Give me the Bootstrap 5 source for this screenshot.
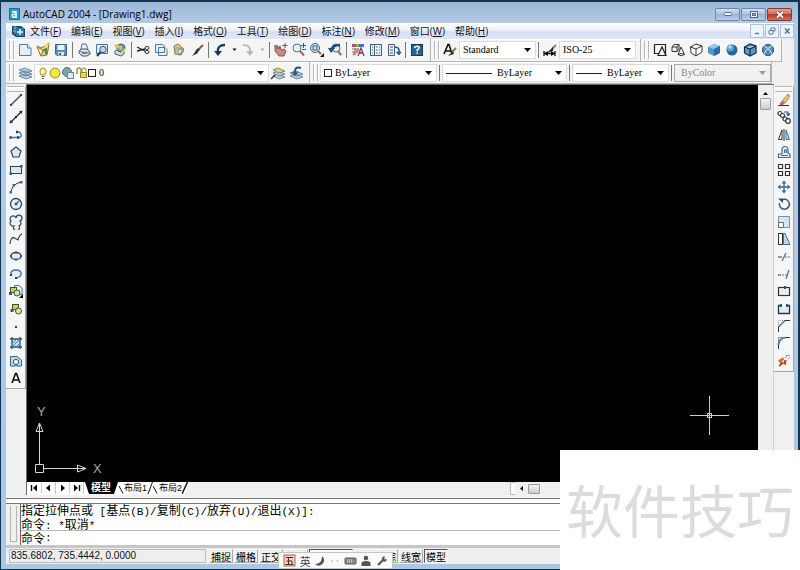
<!DOCTYPE html>
<html lang="zh-CN">
<head>
<meta charset="utf-8">
<meta name="viewport" content="width=device-width, initial-scale=1">
<title>AutoCAD 2004 - [Drawing1.dwg]</title>
<link href="https://cdn.jsdelivr.net/npm/bootstrap@5.3.0/dist/css/bootstrap.min.css" rel="stylesheet">
<style>
body{font:10px/12px "Liberation Sans","Noto Sans CJK SC",sans-serif;color:#111;background:#f0f0f0}
.frame{border:solid #12364d;border-width:2px 2px 1px 1px;background:linear-gradient(#9cb7d6,#b4cbe6 22px,#a9c7e6);padding:0 4px 5px 5px}
.face{background:#f0f0f0}
.titlebar{height:21px;padding:3px 2px 0 3px;gap:3px}
.title-text{font:10px/18px "Open Sans","Noto Sans",sans-serif;color:#000}
.wbtns{gap:1px}
.wbtn{width:25px;height:13px;border:1px solid #6d87a8;background:linear-gradient(#d0def0,#a7c0de 50%,#98b4d6 50%,#b9cfe9);border-radius:2px}
.wclose{background:linear-gradient(#e5a394,#cf6450 50%,#bb3a22 50%,#d4705a);border-color:#7b3a38}
.menubar{height:16px;padding-left:1px;background:linear-gradient(#fff,#eef1fa 45%,#d9e0f3 55%,#dfe6f6)}
.menubar a{color:#111;text-decoration:none;font:10px/15px "Open Sans","Noto Sans CJK SC",sans-serif;white-space:nowrap}
.menus{gap:10px}
.mdis{gap:1px}
.mdi{width:14px;height:14px;border:1px solid #b0c2da;background:#edf3fb}
.strip{border:solid #b4b4b4;border-width:0 1px 1px 0;background:#f5f5f5;box-shadow:inset 0 1px #fff;padding:0 4px 0 2px}
.strip.tail{padding-right:0}
.row1{height:23px}
.row2{height:22px}
.grip{width:8px;padding:2px 1px}
.grip::before{content:"";display:block;height:100%;border:solid #b5b5b5;border-width:0 1px;width:5px;box-shadow:inset 1px 0 #fff,1px 0 #fff}
.tool{width:18px;height:18px}
.tool svg,.palette svg{display:block;width:16px;height:16px;margin:auto}
.drop{width:10px;height:18px}
.bar{width:1px;height:16px;background:#777;margin:0 2px}
.combo{height:18px;background:#fff;border:1px solid #dcdcdc;padding:0 4px 0 2px;gap:1px;min-width:0}
.combo select{appearance:none;border:0;background:none;flex:1 1 0;min-width:0;padding:0 1px;font:10px/14px "Liberation Serif",serif;color:#000;opacity:1;outline-offset:-1px}
.combo .tri{width:7px;height:4px;flex:none}
.combo.off{background:#f1f1f1;border-color:#aaa}
.combo.off select{color:#8a8a8a}
.w-text{width:77px}.w-layer{width:235px}.w-color{width:117px}.w-line{width:125px}.w-weight{width:97px}
.palette{width:20px;background:#f6f6f6;border:solid #a5a5a5;border-width:0 1px 1px 0;flex:none;padding-bottom:2px}
.hgrip{height:6px;margin:2px 1px 0;border:solid #b5b5b5;border-width:1px 0;box-shadow:inset 0 1px #fff}
.tools-left{height:294px}.tools-right{height:277px}
.palette button{height:16px}
.well{border:solid #6a6a6a;border-width:1px 0 0 1px}
.model{background:#000;cursor:crosshair}
.ucs{position:absolute;left:6px;bottom:1px;width:72px;height:76px}
.cross{position:absolute;right:28px;bottom:46px;width:41px;height:41px}
.vscroll{width:16px;background:#efefef;border-right:1px solid #d0d0d0}
.thumb{border:1px solid #9a9a9a;background:linear-gradient(#f4f4f4,#cdcdcd);border-radius:1px}
.vthumb{width:11px;height:12px}
.hthumb{width:12px;height:10px}
.tabs{height:13px}
.tabnav{background:#fff;padding-left:1px}
.tabnav button{width:14px;height:12px;border-right:1px solid #ccc!important}
.sheets{background:#fff;clip-path:polygon(0 0,100% 0,calc(100% - 5px) 100%,0 100%)}
.sheet{font:9px/12px "Liberation Sans","Noto Sans CJK SC",sans-serif;height:12px;color:#000}
.sheet.active{background:#000;color:#fff;font-size:10px;font-weight:700}
.slash{width:7px;height:12px;flex:none}
.slash.narrow{width:6px}
.hscroll{gap:4px;width:264px}
.notch{width:5px;background:#fff;border:1px solid #bbb;border-right:0}
.splitter{height:9px;background:linear-gradient(#f2f2f2 3px,#777 3px,#777 4px,#fff 4px,#fff 8px,#777 8px)}
.cmd{height:41px}
.cmdgrip{width:7px;margin:2px 3px 3px 4px;border:solid #b5b5b5;border-width:0 1px 1px;flex:none}
.cmdbox{background:#fff;border-left:1px solid #666}
.cmdtext{font:12px/12px "Noto Sans CJK SC",sans-serif;white-space:pre;color:#000}
.cmdtext span{font:11px/12px "Liberation Mono",monospace}
.history{height:27px;border-bottom:1px solid #bbb}
.prompt{height:13px}
.status{height:19px;background:#efeded;border-top:3px solid #c6c6c6}
.coords{width:197px;height:14px;border:1px solid #bbb;line-height:12px;padding-left:1px;margin-left:3px;white-space:pre}
.mode{font:10px/13px "Noto Sans CJK SC",sans-serif;color:#000;height:14px;border:1px solid #f5f5f5;border-right-color:#aaa;border-bottom-color:#aaa;padding:0 1px;white-space:nowrap}
.mode.on{border-color:#555 #eee #eee #555;background:#f8f8f8}
.modes{gap:1px;margin-left:3px}
.ime{position:absolute;left:277px;bottom:0;width:115px;height:17px;background:#fafafa;border:1px solid #c5c5c5;padding:0 4px;font:11px/14px "Noto Sans CJK SC",sans-serif;color:#444}
.stamp{position:absolute;right:0;bottom:0;width:240px;height:120px;background:#fff;color:#dcdcdc;font:57px/116px "Noto Sans CJK SC",sans-serif;text-align:center}
</style>
<script src="https://cdn.jsdelivr.net/npm/bootstrap@5.3.0/dist/js/bootstrap.bundle.min.js"></script>
</head>
<body>
<div class="frame vh-100 d-flex flex-column position-relative overflow-hidden">
<header class="titlebar d-flex align-items-center flex-shrink-0">
  <svg width="11" height="12" viewBox="0 0 11 12" class="flex-shrink-0"><rect width="11" height="12" fill="#0e7396"/><rect x="1" y="1" width="9" height="10" fill="#2a9cbd"/><path d="M3 4.4Q5 3 7 4v6M7 6.3Q3 6 3.2 8T7 8.700" fill="none" stroke="#fff" stroke-width="1.600"/></svg>
  <span class="title-text flex-grow-1">AutoCAD 2004 - [Drawing1.dwg]</span>
  <div class="wbtns d-flex">
  <button class="wbtn p-0 d-flex align-items-center justify-content-center" aria-label="最小化"><svg width="10" height="6"><rect x="1.500" y="1.500" width="7" height="3" rx="1" fill="#fff" stroke="#526780"/></svg></button>
  <button class="wbtn p-0 d-flex align-items-center justify-content-center" aria-label="还原"><svg width="10" height="9"><rect x="1.500" y="1.500" width="7" height="6" fill="#fff" stroke="#526780"/><rect x="3.500" y="3.500" width="3" height="2" fill="#9db6d4" stroke="#526780"/></svg></button>
  <button class="wbtn wclose p-0 d-flex align-items-center justify-content-center" aria-label="关闭"><svg width="10" height="9"><path d="M2 2L8 7.500M8 2L2 7.500" stroke="#6a3430" stroke-width="3"/><path d="M2 2L8 7.500M8 2L2 7.500" stroke="#fff" stroke-width="1.800"/></svg></button>
  </div>
</header>
<nav class="menubar d-flex align-items-center flex-shrink-0">
  <svg width="15" height="14" viewBox="0 0 15 14" class="ms-1 me-1 flex-shrink-0"><path d="M1 2H10L14 5V13H5L1 10Z" fill="#174b68"/><path d="M2 4H7M2 7H7M4 2V10" stroke="#7db7d5"/><rect x="5" y="4" width="8" height="8" fill="#2679a3"/><path d="M9 5V11M6 8H12" stroke="#e5f6ff" stroke-width="1.500"/></svg>
  <div class="menus d-flex flex-grow-1">
  <a href="#">文件(<u>F</u>)</a><a href="#">编辑(<u>E</u>)</a><a href="#">视图(<u>V</u>)</a><a href="#">插入(<u>I</u>)</a><a href="#">格式(<u>O</u>)</a><a href="#">工具(<u>T</u>)</a><a href="#">绘图(<u>D</u>)</a><a href="#">标注(<u>N</u>)</a><a href="#">修改(<u>M</u>)</a><a href="#">窗口(<u>W</u>)</a><a href="#">帮助(<u>H</u>)</a>
  </div>
  <div class="mdis d-flex">
  <button class="mdi p-0 d-flex" aria-label="最小化文档"><svg width="12" height="12"><path d="M4 8.500H8" stroke="#587ca0" stroke-width="1.500"/></svg></button>
  <button class="mdi p-0 d-flex" aria-label="还原文档"><svg width="12" height="12"><path d="M5 5V3H9V6H7M3 5.500H7V9H3Z" fill="none" stroke="#587ca0"/></svg></button>
  <button class="mdi p-0 d-flex" aria-label="关闭文档"><svg width="12" height="12"><path d="M4 3.500L8.500 8.500M8.500 3.500L4 8.500" stroke="#587ca0" stroke-width="1.600"/></svg></button>
  </div>
</nav>
<div class="face d-flex flex-column flex-shrink-0" role="toolbar" aria-label="工具栏">
<div class="d-flex">
<div class="strip row1 d-flex align-items-center">
  <div class="grip h-100"></div>
  <button class="tool btn p-0 border-0" aria-label="新建"><svg viewBox="0 0 16 16"><path d="M2.500 2.500H10.500L14 6V13.500H2.500Z" fill="#e3f0fb" stroke="#587c98"/><path d="M10.500 2.500V6H14" fill="#fff" stroke="#587c98"/></svg></button>
  <button class="tool btn p-0 border-0" aria-label="打开"><svg viewBox="0 0 16 16"><path d="M2 4L6 6L10 4L14 1L13 8L12 13L6 14Z" fill="#e7cf6e" stroke="#87713f"/><path d="M2 5L6 14L8 8Z" fill="#fff0ac" stroke="#987c32"/><path d="M9 4L14 1L12 7Z" fill="#f6e64a"/><path d="M8 9L11 7V12" fill="none" stroke="#376a60" stroke-width="1.500"/></svg></button>
  <button class="tool btn p-0 border-0" aria-label="保存"><svg viewBox="0 0 16 16"><path d="M2.500 2.500H13.500V13.500H4L2.500 12Z" fill="#5c8bb8" stroke="#3b658e"/><rect x="4.500" y="3" width="7" height="5" fill="#e7f1fb"/><rect x="5" y="10" width="6" height="3.500" fill="#dce8f0"/><rect x="6" y="11" width="2" height="2" fill="#345d82"/></svg></button>
  <span class="bar"></span>
  <button class="tool btn p-0 border-0" aria-label="打印"><svg viewBox="0 0 16 16"><path d="M5 7L6 2H10L12 7" fill="#e8f3fc" stroke="#586d82"/><path d="M3 9L5 7H11L14 10V12L11 14H6L3 11Z" fill="#d8dfe8" stroke="#485566"/><path d="M4 9L8 11H13M6 12L11 10" fill="none" stroke="#53677c"/></svg></button>
  <button class="tool btn p-0 border-0" aria-label="打印预览"><svg viewBox="0 0 16 16"><path d="M2.500 2.500H13.500V11.500H2.500Z" fill="#dcecf8" stroke="#4e7290"/><circle cx="9" cy="7.500" r="3.200" fill="#b6d7ef" stroke="#37597a"/><path d="M6.500 10L3 14" stroke="#27384a" stroke-width="2"/></svg></button>
  <button class="tool btn p-0 border-0" aria-label="发布"><svg viewBox="0 0 16 16"><path d="M3 9L6 7L12 9V12L9 14L3 12Z" fill="#d3dce4" stroke="#4c5f72"/><circle cx="9" cy="6" r="4" fill="#5ca3d0" stroke="#315f85"/><path d="M6 5Q8 2 10 5L9 8ZM9 10L13 6V10Z" fill="#e8cd42"/><path d="M3 3H8L5 8Z" fill="#f2d74f" stroke="#a78934" stroke-width=".6"/></svg></button>
  <span class="bar"></span>
  <button class="tool btn p-0 border-0" aria-label="剪切"><svg viewBox="0 0 16 16" fill="none"><path d="M2 5L10 9M2 9L10 7" stroke="#222" stroke-width="1.300"/><ellipse cx="12" cy="6" rx="2" ry="1.500" stroke="#333"/><ellipse cx="12" cy="10" rx="2" ry="1.500" stroke="#333"/></svg></button>
  <button class="tool btn p-0 border-0" aria-label="复制"><svg viewBox="0 0 16 16" fill="#e6f2fb" stroke="#547994"><path d="M2.500 2.500H9.500L11.500 4V10.500H2.500ZM5.500 5.500H12L14 7.500V13.500H5.500Z"/></svg></button>
  <button class="tool btn p-0 border-0" aria-label="粘贴"><svg viewBox="0 0 16 16"><path d="M3 4L7 2L13 7L10 13L4 12Z" fill="#dfc981" stroke="#907a45"/><path d="M5 6H9L13 9L9 13L5 12Z" fill="#fff2bd" stroke="#a89055"/><path d="M7 7H11V10L9 12H7Z" fill="#dcebf4" stroke="#587b95"/></svg></button>
  <button class="tool btn p-0 border-0" aria-label="特性匹配"><svg viewBox="0 0 16 16"><path d="M14 3L9 8" stroke="#965727" stroke-width="2"/><path d="M10 7L7 10" stroke="#333" stroke-width="2.500"/><path d="M7 9L3 14L9 11Z" fill="#222"/></svg></button>
  <span class="bar"></span>
  <button class="tool btn p-0 border-0" aria-label="放弃"><svg viewBox="0 0 16 16"><path d="M13 3Q5 3 6 10" fill="none" stroke="#173a63" stroke-width="2.300"/><path d="M2 9H10L6 14Z" fill="#173a63"/></svg></button>
  <button class="drop btn p-0 border-0 d-flex align-items-center" aria-label="放弃列表"><svg width="7" height="4" viewBox="0 0 7 4" class="m-auto"><path d="M1.500 .5H5.500L3.500 3Z" fill="#111"/></svg></button>
  <button class="tool btn p-0 border-0" aria-label="重做"><svg viewBox="0 0 16 16"><path d="M3 3Q11 3 10 10" fill="none" stroke="#bbb" stroke-width="2"/><path d="M6 9H14L10 14Z" fill="#bbb"/></svg></button>
  <button class="drop btn p-0 border-0 d-flex align-items-center" aria-label="重做列表"><svg width="7" height="4" viewBox="0 0 7 4" class="m-auto"><path d="M1.500 .5H5.500L3.500 3Z" fill="#aaa"/></svg></button>
  <span class="bar"></span>
  <button class="tool btn p-0 border-0" aria-label="平移"><svg viewBox="0 0 16 16"><path d="M2 3L4 7V3L6 7L7 4L8 8L11 7L13 9L11 14H6L2 9Z" fill="#c88880" stroke="#855752"/><path d="M12 1V6M9.500 3.500H14.500" stroke="#2f6596"/></svg></button>
  <button class="tool btn p-0 border-0" aria-label="实时缩放"><svg viewBox="0 0 16 16"><circle cx="6" cy="6" r="4" fill="#e1f0fa" stroke="#517291"/><path d="M9 9L13 13.500" stroke="#b06852" stroke-width="2.200"/><path d="M12.500 1V6M10 3.500H15M11 7.500H15" stroke="#315f8e"/></svg></button>
  <button class="tool btn p-0 border-0" aria-label="窗口缩放"><svg viewBox="0 0 16 16"><circle cx="6" cy="6" r="4.500" fill="#d1e7f7" stroke="#3b678e"/><rect x="4" y="4" width="4" height="4" fill="none" stroke="#3b678e"/><path d="M9 9L12 12" stroke="#b06852" stroke-width="2.200"/><path d="M15 11V15H11Z" fill="#111"/></svg></button>
  <button class="tool btn p-0 border-0" aria-label="缩放上一个"><svg viewBox="0 0 16 16"><circle cx="9" cy="6" r="4" fill="#dfeefa" stroke="#3b678e"/><path d="M11 9L14 13" stroke="#b06852" stroke-width="2.200"/><path d="M4 9Q5 3 13 3" fill="none" stroke="#204c7b" stroke-width="2.500"/><path d="M1 6H8L4 11Z" fill="#204c7b"/></svg></button>
  <span class="bar"></span>
  <button class="tool btn p-0 border-0" aria-label="特性"><svg viewBox="0 0 16 16"><rect x="2" y="2" width="4" height="3" fill="#c54370"/><rect x="6" y="2" width="3" height="3" fill="#7ab84a"/><rect x="9" y="2" width="5" height="3" fill="#4e6fc1"/><path d="M2 7H9M2 10H8M5 6V13" stroke="#667a8f"/><path d="M8 14L11 6L14 14M9 11H13" fill="none" stroke="#703e76" stroke-width="1.300"/><path d="M3 13L9 7" stroke="#de7654" stroke-width="2"/></svg></button>
  <button class="tool btn p-0 border-0" aria-label="设计中心"><svg viewBox="0 0 16 16" fill="#e7f3fb" stroke="#41627d"><rect x="2.500" y="2.500" width="11" height="11"/><path d="M6.500 2.500V13.500M8 5H9.500M11 5H12M8 8H9.500M11 8H12M8 11H9.500M11 11H12M4 5H5M4 8H5M4 11H5"/></svg></button>
  <button class="tool btn p-0 border-0" aria-label="工具选项板"><svg viewBox="0 0 16 16" fill="#e7f3fb" stroke="#41627d"><path d="M2.500 2.500H8.500V13.500H2.500ZM4 5H7M4 8H7M4 11H7"/><path d="M9 5Q14 5 13 11" fill="none" stroke="#245183" stroke-width="1.500"/><path d="M10.500 10H15L13 13Z" fill="#245183"/></svg></button>
  <span class="bar"></span>
  <button class="tool btn p-0 border-0" aria-label="帮助"><svg viewBox="0 0 16 16"><rect x="2.500" y="2.500" width="11" height="11" fill="#276491" stroke="#143b62"/><path d="M5.500 6Q6 4 8.500 4.200Q12 5.500 8.200 8V9.500M8.200 10.500V12" fill="none" stroke="#fff" stroke-width="1.500"/></svg></button>
</div>
<div class="strip row1 d-flex align-items-center">
  <div class="grip h-100"></div>
  <button class="tool btn p-0 border-0" aria-label="文字样式"><svg viewBox="0 0 16 16"><path d="M2 12L6 2.500H7L10 12M4 9H9" fill="none" stroke="#111" stroke-width="1.600"/><path d="M14 6L10 10" stroke="#9b7644" stroke-width="2"/><path d="M11 9L6 14L12 12Z" fill="#333"/></svg></button>
  <div class="combo w-text d-flex align-items-center"><select aria-label="文字样式名"><option>Standard</option></select><svg class="tri" viewBox="0 0 7 4"><path d="M0 0H7L3.500 4Z"/></svg></div>
  <span class="bar"></span>
  <button class="tool btn p-0 border-0" aria-label="标注样式"><svg viewBox="0 0 16 16"><path d="M2 9V14M13 9V14M2 11.500H13" stroke="#111" stroke-width="1.300"/><path d="M2 11.500L6 9V14ZM13 11.500L9 9V14Z"/><path d="M14 3L10 7" stroke="#a67b3e" stroke-width="2"/><path d="M11 5L5 11L11 9Z" fill="#222"/></svg></button>
  <div class="combo w-text d-flex align-items-center"><select aria-label="标注样式名"><option>ISO-25</option></select><svg class="tri" viewBox="0 0 7 4"><path d="M0 0H7L3.500 4Z"/></svg></div>
</div>
<div class="strip row1 d-flex align-items-center">
  <div class="grip h-100"></div>
  <button class="tool btn p-0 border-0" aria-label="二维线框"><svg viewBox="0 0 16 16" fill="none" stroke="#222" stroke-width="1.200"><path d="M2.500 2.500H13.500V13M2.500 2.500V11.500H7"/><path d="M6 13.500L10 5L14 13.500Z"/></svg></button>
  <button class="tool btn p-0 border-0" aria-label="三维线框"><svg viewBox="0 0 16 16" fill="none" stroke="#333"><path d="M2 5L4 2.500H9V7L7 9.500H2ZM2 5H7V9.500M7 5L9 2.500M11 5L8 12.500Q11 15 14.500 12.500ZM8 12.500Q11 10.500 14.500 12.500"/></svg></button>
  <button class="tool btn p-0 border-0" aria-label="消隐"><svg viewBox="0 0 16 16" fill="#fff" stroke="#333"><path d="M2.500 5L8 2L14 4V10L8 14L3 11ZM2.500 5L8 7L14 4M8 7V14"/></svg></button>
  <button class="tool btn p-0 border-0" aria-label="平面着色"><svg viewBox="0 0 16 16"><path d="M2 5L8 2L14 4V11L8 14L2 11Z" fill="#4a96d0"/><path d="M2 5L8 2L14 4L8 7Z" fill="#8fc8ef"/><path d="M8 7V14L14 11V4Z" fill="#2c6ca5"/></svg></button>
  <button class="tool btn p-0 border-0" aria-label="体着色"><svg viewBox="0 0 16 16"><circle cx="8" cy="8" r="5.500" fill="#28669a"/><circle cx="6.500" cy="6" r="3.500" fill="#5ca4d5"/><circle cx="6" cy="5" r="1.500" fill="#c3e6fa"/></svg></button>
  <button class="tool btn p-0 border-0" aria-label="带边框平面着色"><svg viewBox="0 0 16 16" fill="#5b9aca" stroke="#132c45" stroke-width="1.200"><path d="M2.500 5L8 2L14 4V11L8 14L2.500 11Z"/><path d="M2.500 5L8 7L14 4M8 7V14" fill="#a2d2ef"/></svg></button>
  <button class="tool btn p-0 border-0" aria-label="带边框体着色"><svg viewBox="0 0 16 16"><circle cx="8" cy="8" r="5.500" fill="#4d8fc0" stroke="#23496b"/><path d="M4 4Q10 6 12 12M12 4Q6 6 4 12" fill="none" stroke="#d4edfb"/></svg></button>
</div>
</div>
<div class="d-flex">
<div class="strip row2 d-flex align-items-center">
  <div class="grip h-100"></div>
  <button class="tool btn p-0 border-0" aria-label="图层特性管理器"><svg viewBox="0 0 16 16" fill="#b8cee2" stroke="#577590" stroke-width=".8"><path d="M2 11L8 9L15 12L9 14ZM2 8L8 6L15 9L9 11ZM2 5L8 3L15 6L9 8Z"/></svg></button>
  <div class="combo w-layer d-flex align-items-center">
  <svg width="60" height="14" viewBox="0 0 60 14" class="flex-shrink-0"><path d="M4 9Q1 3 6 2Q11 3 8 9Z" fill="#fff49b" stroke="#9b8a37"/><path d="M4.500 10.500H7.500M5 12.500H7" stroke="#567"/><circle cx="18" cy="7" r="5" fill="#f1e73e" stroke="#939040"/><circle cx="30" cy="6" r="4.500" fill="#79a6ac" stroke="#536f78"/><rect x="30.500" y="6.500" width="6" height="6" fill="#d9e8ee" stroke="#6f8792"/><path d="M40 8V4Q40 2 42 2T44 4V7" fill="none" stroke="#948b2e" stroke-width="1.300"/><rect x="43.500" y="6.500" width="6" height="5" fill="#e8db43" stroke="#948b2e"/><path d="M45 6V3Q47 1 49 3V6" fill="none" stroke="#948b2e"/><rect x="51.500" y="3.500" width="7" height="7" fill="#fff" stroke="#222"/></svg>
  <select aria-label="图层"><option>0</option></select><svg class="tri" viewBox="0 0 7 4"><path d="M0 0H7L3.500 4Z"/></svg></div>
  <button class="tool btn p-0 border-0" aria-label="将对象的图层置为当前"><svg viewBox="0 0 16 16" stroke="#617580" stroke-width=".8"><path d="M3 11L8 9L15 12L9 14Z" fill="#b8cee2"/><path d="M3 8L8 6L15 9L9 11Z" fill="#b8cee2"/><path d="M3 5L8 3L15 6L9 8Z" fill="#e3d85b"/><path d="M1 14L5 10" stroke="#222" stroke-width="1.300"/></svg></button>
  <button class="tool btn p-0 border-0" aria-label="上一个图层"><svg viewBox="0 0 16 16" stroke="#577590" stroke-width=".8"><path d="M2 11L8 9L15 12L9 14ZM2 8L8 6L15 9L9 11Z" fill="#b8cee2"/><path d="M13 3Q6 1 7 8" fill="none" stroke="#24527f" stroke-width="2"/><path d="M4 7H10L7 11Z" fill="#24527f"/></svg></button>
</div>
<div class="strip tail row2 d-flex align-items-center">
  <div class="grip h-100"></div>
  <div class="combo w-color d-flex align-items-center"><svg width="10" height="12" class="flex-shrink-0"><rect x="1.500" y="2.500" width="7" height="7" fill="#fff" stroke="#222"/></svg><select aria-label="颜色"><option>ByLayer</option></select><svg class="tri" viewBox="0 0 7 4"><path d="M0 0H7L3.500 4Z"/></svg></div>
  <span class="bar"></span>
  <div class="combo w-line d-flex align-items-center"><svg width="47" height="12" class="flex-shrink-0"><path d="M1 6.500H47" stroke="#222"/></svg><select aria-label="线型" class="ps-1"><option>ByLayer</option></select><svg class="tri" viewBox="0 0 7 4"><path d="M0 0H7L3.500 4Z"/></svg></div>
  <span class="bar"></span>
  <div class="combo w-weight d-flex align-items-center"><svg width="27" height="12" class="flex-shrink-0"><path d="M1 6.500H27" stroke="#222"/></svg><select aria-label="线宽" class="ps-1"><option>ByLayer</option></select><svg class="tri" viewBox="0 0 7 4"><path d="M0 0H7L3.500 4Z"/></svg></div>
  <span class="bar"></span>
  <div class="combo off w-weight d-flex align-items-center"><select aria-label="打印样式" class="ps-1" disabled><option>ByColor</option></select><svg class="tri" viewBox="0 0 7 4"><path d="M0 0H7L3.500 4Z" fill="#999"/></svg></div>
</div>
</div>
</div>
<main class="face d-flex flex-grow-1 overflow-hidden">
<aside class="h-100 flex-shrink-0"><div class="palette">
  <div class="hgrip"></div>
  <div class="tools-left d-flex flex-column justify-content-between">
  <button class="btn p-0 border-0" aria-label="直线"><svg viewBox="0 0 16 16"><path d="M3 13L13 3" stroke="#30577c" stroke-width="1.400"/><path d="M2 12H4V14H2ZM12 2H14V4H12Z" fill="#1d4870"/></svg></button>
  <button class="btn p-0 border-0" aria-label="构造线"><svg viewBox="0 0 16 16"><path d="M3 13L13 3" stroke="#222" stroke-width="1.200"/><path d="M1.500 14.500L2.500 11L5 13.500ZM14.500 1.500L13.500 5L11 2.500ZM7 7H9V9H7Z" fill="#182a3c"/></svg></button>
  <button class="btn p-0 border-0" aria-label="多段线"><svg viewBox="0 0 16 16" fill="none" stroke="#3c75a8" stroke-width="1.300"><path d="M2 10.500H11Q14 10 13 7T8 5"/><path d="M1.500 10.500H3.500M9 10.500H11M8 5H10" stroke="#183d60" stroke-width="2.400"/></svg></button>
  <button class="btn p-0 border-0" aria-label="正多边形"><svg viewBox="0 0 16 16"><path d="M8 3L13 7L11 13H5L3 7Z" fill="#d9e8f4" stroke="#30465b" stroke-width="1.200"/></svg></button>
  <button class="btn p-0 border-0" aria-label="矩形"><svg viewBox="0 0 16 16"><rect x="2.500" y="4.500" width="11" height="7" fill="#d9e8f4" stroke="#30465b"/><path d="M1.500 10.500H4V13H1.500ZM12 3H14.500V5.500H12Z" fill="#285d8d"/></svg></button>
  <button class="btn p-0 border-0" aria-label="圆弧"><svg viewBox="0 0 16 16"><path d="M3 13Q4 5 13 3" fill="none" stroke="#333"/><path d="M1.500 12H4V14.500H1.500ZM4.500 5H7V7.500H4.500ZM12 2H14.500V4.500H12Z" fill="#356a9d"/></svg></button>
  <button class="btn p-0 border-0" aria-label="圆"><svg viewBox="0 0 16 16"><circle cx="8" cy="8" r="5.500" fill="#e8f2fa" stroke="#29435c" stroke-width="1.300"/><path d="M8 8L12 4" stroke="#3777b0" stroke-width="1.500"/><circle cx="8" cy="8" r="1.500" fill="#285d8d"/></svg></button>
  <button class="btn p-0 border-0" aria-label="修订云线"><svg viewBox="0 0 16 16"><path d="M8 4A3 3 0 1 0 3 7A3 3 0 0 0 6 12A3 3 0 1 0 11 12A3 3 0 0 0 12 7A3 3 0 1 0 8 4Z" fill="#e9f1f8" stroke="#35495e" stroke-width="1.200"/></svg></button>
  <button class="btn p-0 border-0" aria-label="样条曲线"><svg viewBox="0 0 16 16"><path d="M2 13Q3 5 6.500 7T10 9Q11 4 14 3" fill="none" stroke="#333" stroke-width="1.100"/></svg></button>
  <button class="btn p-0 border-0" aria-label="椭圆"><svg viewBox="0 0 16 16"><ellipse cx="8" cy="8" rx="5" ry="3.500" fill="#e2eff9" stroke="#29435c" stroke-width="1.300"/><path d="M7 3.500H9V5.500H7ZM2 7H4V9H2ZM12 7H14V9H12ZM7 10.500H9V12.500H7Z" fill="#285d8d"/></svg></button>
  <button class="btn p-0 border-0" aria-label="椭圆弧"><svg viewBox="0 0 16 16"><path d="M3 9Q2 4 8 4T13 9Q11 12 8 12" fill="#e2eff9" stroke="#3c70a1" stroke-width="1.300"/><path d="M2 8H4V10H2ZM7 11H9V13H7Z" fill="#183d60"/></svg></button>
  <button class="btn p-0 border-0" aria-label="插入块"><svg viewBox="0 0 16 16"><path d="M6.500 2.500H11L14 5V11.500H6.500Z" fill="#e4f1fa" stroke="#547994"/><rect x="2.500" y="4.500" width="6" height="5" fill="#c6ce65" stroke="#36592c"/><circle cx="9" cy="10" r="3" fill="#d9e4a5" stroke="#36592c"/><rect x="1" y="9" width="3" height="3" fill="#285d8d"/><path d="M15 11V15H11Z"/></svg></button>
  <button class="btn p-0 border-0" aria-label="创建块"><svg viewBox="0 0 16 16"><rect x="4.500" y="3.500" width="6" height="5" fill="#c6ce65" stroke="#36592c"/><circle cx="10.500" cy="10" r="3" fill="#d9e4a5" stroke="#36592c"/><rect x="2.500" y="8" width="3" height="3" fill="#285d8d"/></svg></button>
  <button class="btn p-0 border-0" aria-label="点"><svg viewBox="0 0 16 16"><rect x="7" y="8" width="2" height="2" fill="#204a73"/></svg></button>
  <button class="btn p-0 border-0" aria-label="图案填充"><svg viewBox="0 0 16 16"><rect x="4" y="4" width="8" height="8" fill="#c8dff1"/><path d="M4 2V14M12 2V14M2 4H14M2 12H14" stroke="#264f76" stroke-width="1.300"/><path d="M4 9L9 4M4 12L12 4M8 12L12 8" stroke="#4d84b4"/></svg></button>
  <button class="btn p-0 border-0" aria-label="面域"><svg viewBox="0 0 16 16"><path d="M2.500 3.500H9L13.500 7V13H2.500Z" fill="#bdd9ed" stroke="#3d6589"/><circle cx="8" cy="9" r="2.700" fill="#fff" stroke="#3d6589"/></svg></button>
  <button class="btn p-0 border-0" aria-label="多行文字"><svg viewBox="0 0 16 16"><path d="M4 13L7.500 3.500H8.500L12 13M5.500 10H10.500" fill="none" stroke="#111" stroke-width="1.600"/></svg></button>
  </div>
</div></aside>
<section class="well d-flex flex-column flex-grow-1 overflow-hidden">
  <div class="d-flex flex-grow-1">
  <div class="model position-relative flex-grow-1">
    <svg class="ucs" viewBox="0 0 72 76"><g fill="none" stroke="#d5d5d5"><path d="M2.500 59.500H10.500V67.500H2.500ZM6.500 59V18M11 63.500H53M3 26.500H10L6.500 18ZM44.500 60V67L53 63.500Z"/></g><text x="4" y="11" font-family="Liberation Sans,sans-serif" font-size="13" fill="#aaa">Y</text><text x="60" y="68" font-family="Liberation Sans,sans-serif" font-size="13" fill="#aaa">X</text></svg>
    <svg class="cross" viewBox="0 0 41 41"><path d="M1 20.500H40M20.500 1V40" stroke="#ccc"/><rect x="18.500" y="18.500" width="4" height="4" fill="none" stroke="#ccc"/></svg>
  </div>
  <div class="vscroll d-flex flex-column align-items-center flex-shrink-0 pt-1"><svg width="7" height="9"><path d="M1 6H6L3.500 3Z"/></svg><span class="thumb vthumb"></span></div>
  </div>
  <div class="tabs face d-flex flex-shrink-0">
    <div class="tabnav d-flex">
    <button class="btn p-0 border-0 rounded-0 d-flex" aria-label="第一个"><svg width="12" height="12"><path d="M3.500 3V9" stroke="#000" stroke-width="1.400"/><path d="M9 2.500V9.500L5 6Z"/></svg></button>
    <button class="btn p-0 border-0 rounded-0 d-flex" aria-label="上一个"><svg width="12" height="12"><path d="M8 2.500V9.500L4 6Z"/></svg></button>
    <button class="btn p-0 border-0 rounded-0 d-flex" aria-label="下一个"><svg width="12" height="12"><path d="M5 2.500V9.500L9 6Z"/></svg></button>
    <button class="btn p-0 border-0 rounded-0 d-flex" aria-label="最后一个"><svg width="12" height="12"><path d="M9.500 3V9" stroke="#000" stroke-width="1.400"/><path d="M4 2.500V9.500L8 6Z"/></svg></button>
    </div>
    <div class="sheets d-flex">
    <svg class="slash" viewBox="0 0 7 12"><path d="M1 0H7V12H5Z"/></svg><button class="sheet active btn p-0 border-0 rounded-0">模型</button><svg class="slash" viewBox="0 0 7 12"><path d="M0 0H7L3 12H0Z"/></svg>
    <svg class="slash narrow" viewBox="0 0 6 12"><path d="M1 4L5 11.500" stroke="#111"/></svg><button class="sheet btn p-0 border-0 rounded-0">布局1</button><svg class="slash narrow" viewBox="0 0 6 12"><path d="M5.500 0L1 12" stroke="#111"/></svg>
    <svg class="slash narrow" viewBox="0 0 6 12"><path d="M0 4L4 11.500" stroke="#111"/></svg><button class="sheet btn p-0 border-0 rounded-0">布局2</button><svg class="slash" viewBox="0 0 7 12"><path d="M5.500 0L0 12" stroke="#111" stroke-width="1.500"/></svg>
    </div>
    <div class="hscroll d-flex align-items-center ms-auto"><span class="notch h-100"></span><svg width="5" height="7"><path d="M4 1V6L1 3.500Z"/></svg><span class="thumb hthumb"></span></div>
  </div>
</section>
<aside class="h-100 flex-shrink-0"><div class="palette">
  <div class="hgrip"></div>
  <div class="tools-right d-flex flex-column justify-content-between">
  <button class="btn p-0 border-0" aria-label="删除"><svg viewBox="0 0 16 16"><path d="M2 13.500H13" stroke="#333"/><path d="M4 11L6 9L9 11L7 13H4Z" fill="#c66b64"/><path d="M6 9L12 2L14 4L9 11Z" fill="#e3c873" stroke="#80632e" stroke-width=".7"/></svg></button>
  <button class="btn p-0 border-0" aria-label="复制对象"><svg viewBox="0 0 16 16" fill="#fff" stroke="#333" stroke-width="1.200"><circle cx="4" cy="4.500" r="2"/><circle cx="6.500" cy="6.500" r="2"/><circle cx="9" cy="10" r="2"/><circle cx="12" cy="12" r="2.300"/><path d="M8 3H12V6M10.500 4.500L12 6.500L14 4.500" fill="none" stroke="#285d8d"/></svg></button>
  <button class="btn p-0 border-0" aria-label="镜像"><svg viewBox="0 0 16 16"><path d="M6 3V12.500H2.500Z" fill="#fff" stroke="#333"/><path d="M10 3V12.500H13.500Z" fill="#b7d6ed" stroke="#3975a9"/><path d="M8 2V14" stroke="#333"/></svg></button>
  <button class="btn p-0 border-0" aria-label="偏移"><svg viewBox="0 0 16 16" fill="#e6f1f9" stroke="#386d9c" stroke-width="1.200"><path d="M2.500 13.500V10H6V6Q6 2.500 9 2.500T12 6V9L14 10.500V13.500Z"/><path d="M5 11.500H12M8.500 9V6.500Q10 5 10.500 7V9" fill="none"/></svg></button>
  <button class="btn p-0 border-0" aria-label="阵列"><svg viewBox="0 0 16 16" fill="#fff" stroke="#333" stroke-width="1.200"><path d="M2.500 2.500H6.500V6.500H2.500ZM9.500 2.500H13.500V6.500H9.500ZM2.500 9.500H6.500V13.500H2.500ZM9.500 9.500H13.500V13.500H9.500Z"/></svg></button>
  <button class="btn p-0 border-0" aria-label="移动"><svg viewBox="0 0 16 16"><path d="M8 3V13M3 8H13" stroke="#3a6c99" stroke-width="1.400"/><path d="M8 1.500L10.500 4.500H5.500ZM8 14.500L5.500 11.500H10.500ZM1.500 8L4.500 5.500V10.500ZM14.500 8L11.500 10.500V5.500Z" fill="#3a6c99"/></svg></button>
  <button class="btn p-0 border-0" aria-label="旋转"><svg viewBox="0 0 16 16"><path d="M5 4.500A5 5 0 1 1 3.500 7" fill="none" stroke="#3a5f82" stroke-width="1.600"/><path d="M2 2.500H7V7Z" fill="#244f7b"/></svg></button>
  <button class="btn p-0 border-0" aria-label="缩放"><svg viewBox="0 0 16 16"><path d="M2.500 2.500H13.500V13.500H2.500Z" fill="#d5e6f3" stroke="#7292aa"/><path d="M2.500 8.500H7.500V13.500H2.500Z" fill="#fff" stroke="#4e7594"/></svg></button>
  <button class="btn p-0 border-0" aria-label="拉伸"><svg viewBox="0 0 16 16"><rect x="2.500" y="2.500" width="4" height="11" fill="#fff" stroke="#333"/><path d="M7.500 2.500H9L14 13.500H7.500Z" fill="#bdd9ed" stroke="#49708f"/></svg></button>
  <button class="btn p-0 border-0" aria-label="修剪"><svg viewBox="0 0 16 16"><path d="M2 8H6" stroke="#333"/><path d="M6 12L10 4" stroke="#3c79af" stroke-width="1.300"/><path d="M9 8H14" stroke="#3c79af" stroke-dasharray="2 1"/></svg></button>
  <button class="btn p-0 border-0" aria-label="延伸"><svg viewBox="0 0 16 16"><path d="M2 9H5" stroke="#333"/><path d="M6 9H11" stroke="#3c79af" stroke-dasharray="2 1"/><path d="M10 13L13 4" stroke="#3c79af" stroke-width="1.300"/></svg></button>
  <button class="btn p-0 border-0" aria-label="打断于点"><svg viewBox="0 0 16 16"><rect x="2.500" y="4.500" width="11" height="8" fill="#e3eff8" stroke="#333" stroke-width="1.200"/><rect x="8" y="3" width="2" height="3" fill="#31516d"/></svg></button>
  <button class="btn p-0 border-0" aria-label="打断"><svg viewBox="0 0 16 16"><path d="M5 4.500H2.500V12.500H13.500V4.500H11" fill="#e3eff8" stroke="#333" stroke-width="1.300"/><path d="M4 3H6V6H4ZM10 3H12V6H10Z" fill="#285d8d"/></svg></button>
  <button class="btn p-0 border-0" aria-label="倒角"><svg viewBox="0 0 16 16"><path d="M2.500 14V8M8 2.500H14" stroke="#333"/><path d="M2.500 9L9 2.500" stroke="#3c79af" stroke-width="1.500"/><path d="M2.500 7V2.500H7" fill="none" stroke="#999" stroke-dasharray="1 1"/></svg></button>
  <button class="btn p-0 border-0" aria-label="圆角"><svg viewBox="0 0 16 16"><path d="M2.500 14V9M9 2.500H14" stroke="#333"/><path d="M2.500 10Q3 3 10 2.500" fill="none" stroke="#3c79af" stroke-width="1.700"/><path d="M2.500 7V2.500H7" fill="none" stroke="#888"/></svg></button>
  <button class="btn p-0 border-0" aria-label="分解"><svg viewBox="0 0 16 16"><path d="M2 7L5 6L7 4L8 7L11 7L10 9L10 12L7 11L3 14L4 10Z" fill="#d45f2b"/><path d="M5 8L8 7L8 10Z" fill="#ffe372"/><path d="M3 13L6 10M8 8L10 11" stroke="#7a2d19"/><path d="M9 5L11 3M12 6L14 4M10 2.500H14" stroke="#8c9cac"/></svg></button>
  </div>
</div></aside>
</main>
<div class="splitter flex-shrink-0"></div>
<section class="cmd face d-flex flex-shrink-0" aria-label="命令行">
  <div class="cmdgrip"></div>
  <div class="cmdbox flex-grow-1">
  <div class="history"><div class="cmdtext">指定拉伸点或<span> [</span>基点<span>(B)/</span>复制<span>(C)/</span>放弃<span>(U)/</span>退出<span>(X)]:</span></div><div class="cmdtext">命令<span>: *</span>取消<span>*</span></div></div>
  <label class="prompt cmdtext d-flex align-items-center">命令<span>:</span><input class="border-0 p-0 h-100 flex-grow-1 bg-transparent" aria-label="命令输入"></label>
  </div>
</section>
<footer class="status d-flex align-items-center flex-shrink-0">
  <div class="coords flex-shrink-0">835.6802, 735.4442, 0.0000</div>
  <div class="modes d-flex"><button class="mode">捕捉</button><button class="mode">栅格</button><button class="mode">正交</button><button class="mode">极轴</button><button class="mode on">对象捕捉</button><button class="mode">对象追踪</button><button class="mode">线宽</button><button class="mode on">模型</button></div>
</footer>
<div class="ime d-flex align-items-center justify-content-between">
  <svg width="13" height="13"><rect x="1" y="1" width="11" height="11" fill="#f5cdbf" stroke="#a76859"/><path d="M3 3.500H10M5.500 4V10M3.500 7H9V10M2.500 10.500H10.500" fill="none" stroke="#522c25"/></svg><span>英</span>
  <svg width="12" height="12"><path d="M8 1Q13 6 7 10Q4 12 1 9Q8 9 8 1Z" fill="#555"/></svg>
  <svg width="10" height="8"><path d="M2 3V5M7 3L8 5" stroke="#aaa"/></svg>
  <svg width="13" height="10"><rect x="1" y="2" width="11" height="6" rx="1" fill="#888" stroke="#555"/><path d="M3 4H8M3 6H8" stroke="#eee" stroke-dasharray="1 1"/></svg>
  <svg width="12" height="12"><circle cx="6" cy="3" r="2.300" fill="#555"/><path d="M1.500 11V8Q2 6 6 6T10.500 8V11Z" fill="#555"/></svg>
  <svg width="12" height="12"><path d="M2 10L7 5" stroke="#555" stroke-width="2.200"/><path d="M8 1Q4 4 7 6T11 4L8.500 4.500V1Z" fill="#555"/></svg>
</div>
</div>
<div class="stamp">软件技巧</div>
</body>
</html>
